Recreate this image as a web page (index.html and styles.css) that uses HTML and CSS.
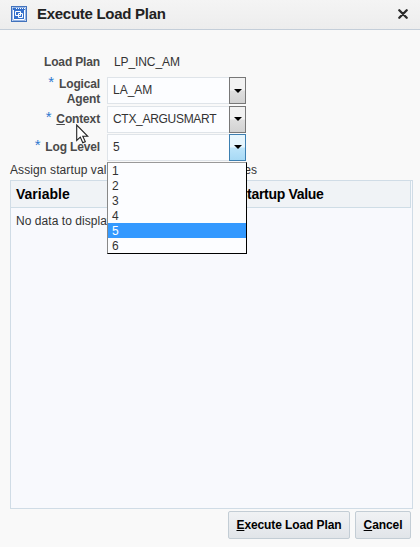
FILE: index.html
```html
<!DOCTYPE html>
<html lang="en">
<head>
<meta charset="utf-8">
<title>Execute Load Plan</title>
<link rel="stylesheet" href="styles.css">
</head>
<body>
<div class="dialog">
  <header class="titlebar">
    <svg class="app-icon" width="16" height="16" viewBox="0 0 16 16">
      <rect x=".5" y=".5" width="15" height="15" fill="#fff" stroke="#4272bc"/>
      <rect x="1.500" y="1.500" width="13" height="13" fill="#3470cc"/>
      <path d="M5 2.500h9" stroke="#fff" stroke-dasharray="1 1"/>
      <path d="M2.500 4v9.500h11V4M4.500 5.500h5v4h-5zM7.500 7.500h4v4h-4z" fill="none" stroke="#fff"/>
    </svg>
    <h1>Execute Load Plan</h1>
    <svg class="close" width="10" height="10" viewBox="0 0 10 10"><path d="M1.300 1.300l7.400 7.400M8.700 1.300l-7.400 7.400" stroke="#2b2b2b" stroke-width="2.300" stroke-linecap="round"/></svg>
  </header>
  <main>
    <div class="form">
      <div class="row plain"><div class="label"><span>Load Plan</span></div><div class="value">LP_INC_AM</div></div>
      <div class="row agent"><div class="label"><i class="req"></i><span>Logical<br>Agent</span></div>
        <div class="combo"><span>LA_AM</span><b class="drop"></b></div></div>
      <div class="row"><div class="label"><i class="req"></i><span><u>C</u>ontext</span></div>
        <div class="combo"><span class="context">CTX_ARGUSMART</span><b class="drop"></b></div></div>
      <div class="row"><div class="label"><i class="req"></i><span>Log Level</span></div>
        <div class="combo"><span>5</span><b class="drop active"></b>
          <ul class="menu"><li>1</li><li>2</li><li>3</li><li>4</li><li class="selected">5</li><li>6</li></ul>
        </div></div>
    </div>
    <p class="hint"><span>Assign startup val</span><span>es</span></p>
    <div class="table">
      <div class="thead"><span>Variable</span><span class="startup">Startup Value</span></div>
      <div class="empty">No data to display</div>
    </div>
  </main>
  <footer><button class="execute"><u>E</u>xecute Load Plan</button><button class="cancel"><u>C</u>ancel</button></footer>
  <svg class="cursor" width="13" height="20" viewBox="0 0 13 20"><path d="M.7 1v15.500l3.600-3.400 2.500 5.600 2.500-1.100-2.500-5.300h5z" fill="#fff" stroke="#222" stroke-width="1.100"/></svg>
</div>
</body>
</html>
```
FILE: styles.css
```css
* { box-sizing: border-box; }
body { margin: 0; background: #f9f9f9; font: 12px/15px "Liberation Sans", Arial, sans-serif; color: #333; }
.dialog { position: relative; height: 547px; display: flex; flex-direction: column; overflow: hidden; }
.titlebar { height: 30px; flex: none; display: flex; align-items: center; padding: 0 12px 2px 11px; background: linear-gradient(#f4f4f4, #ededed); border-bottom: 1px solid #c4ced9; }
h1 { margin: 0 auto 0 10px; font-size: 15px; line-height: 18px; letter-spacing: -.28px; color: #222; white-space: nowrap; }
.close { margin-top: 1px; }
main { padding: 24px 8px 0 10px; }
.row { display: flex; height: 28px; align-items: center; }
.row.plain { height: 22px; align-items: flex-start; padding-top: 1px; }
.row.agent { height: 29px; }
.label { width: 90px; display: flex; justify-content: flex-end; text-align: right; font-weight: bold; letter-spacing: -.15px; color: #4a4a4a; white-space: nowrap; }
.agent .label { padding-top: 2px; }
.req { width: 6px; height: 6px; margin: 0 5px 0 0; font-style: normal; }
.req::before { content: "*"; display: block; font: 15px/15px "Liberation Sans", sans-serif; color: #2c78cf; margin-top: -3px; }
.value { margin-left: 14px; letter-spacing: -.1px; }
.context { letter-spacing: -.3px; }
.combo { position: relative; margin-left: 7px; width: 139px; height: 27px; border: 1px solid #dfe4e9; background: #fcfdff; display: flex; align-items: center; padding-left: 5px; }
.drop { margin: 0 -1px 0 auto; width: 17px; height: 27px; flex: none; border: 1px solid #777; background: linear-gradient(#f2f2f2 48%, #dedede 52%, #d2d2d2); display: flex; align-items: center; justify-content: center; }
.drop::after { content: ""; border: 4px solid transparent; border-top-color: #000; border-bottom: 0; }
.drop.active { border-color: #3c7fb1; background: linear-gradient(#e6f5fd 48%, #bce4fa 52%, #a7d9f5); }
.menu { position: absolute; z-index: 2; left: -1px; top: 27px; width: 140px; height: 92px; margin: 0; padding: 0; list-style: none; background: #fcfdff; border: 1px solid #000; border-top-color: #999; border-left-color: #888; }
.menu li { height: 15px; padding-left: 4px; line-height: 16px; }
.menu .selected { background: #3399ff; color: #fff; }
.hint { margin: 1px 0 0; height: 18px; width: 247px; display: flex; justify-content: space-between; line-height: 16px; letter-spacing: .1px; }
.table { width: 403px; height: 329px; border: 1px solid #d0dce6; background: #f8f9fd; }
.thead { width: 400px; height: 27px; display: grid; grid-template-columns: 222px 1fr; align-items: center; padding-left: 5px; background: #f0f3f6; border: solid #cfdde6; border-width: 0 1px 1px 0; font-size: 14px; font-weight: bold; color: #000; }
.startup { letter-spacing: -.3px; }
.empty { padding: 6px 5px; letter-spacing: .05px; }
footer { display: flex; justify-content: flex-end; gap: 5px; padding: 2px 9px 0 0; }
button { height: 28px; padding: 0; border: 1px solid #c3cdd5; border-radius: 2px; background: linear-gradient(#f0f2f4, #e1e5e9); font: bold 12px "Liberation Sans", Arial, sans-serif; letter-spacing: -.1px; color: #000; white-space: nowrap; }
.execute { width: 122px; }
.cancel { width: 56px; }
.cursor { position: absolute; left: 76px; top: 124px; }
```
